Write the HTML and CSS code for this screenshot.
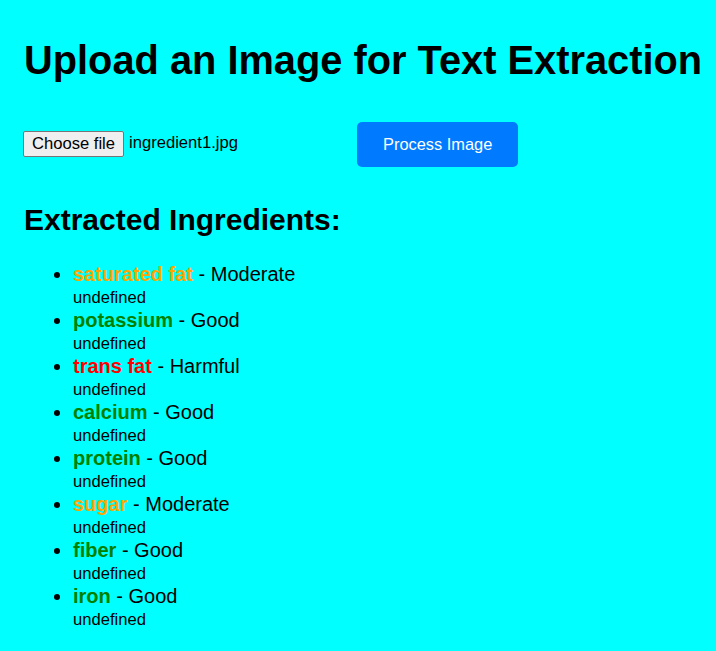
FILE: index.html
```html
<!DOCTYPE html>
<html>
<head>
<meta charset="utf-8">
<link rel="stylesheet" href="styles.css">
</head>
<body>
<div class="container">
  <h1 class="title">Upload an Image for Text Extraction</h1>
  <div class="upload-row">
    <div class="file-input">
      <span class="file-btn">Choose file</span>
      <span class="file-name">ingredient1.jpg</span>
    </div>
    <button class="process-btn">Process Image</button>
  </div>
  <h2 class="subtitle">Extracted Ingredients:</h2>
  <ul class="ingredients">
    <li><span class="name moderate">saturated fat</span> - Moderate<div class="desc">undefined</div></li>
    <li><span class="name good">potassium</span> - Good<div class="desc">undefined</div></li>
    <li><span class="name harmful">trans fat</span> - Harmful<div class="desc">undefined</div></li>
    <li><span class="name good">calcium</span> - Good<div class="desc">undefined</div></li>
    <li><span class="name good">protein</span> - Good<div class="desc">undefined</div></li>
    <li><span class="name moderate">sugar</span> - Moderate<div class="desc">undefined</div></li>
    <li><span class="name good">fiber</span> - Good<div class="desc">undefined</div></li>
    <li><span class="name good">iron</span> - Good<div class="desc">undefined</div></li>
  </ul>
</div>
</body>
</html>
```
FILE: styles.css
```css
html, body {
  margin: 0;
  padding: 0;
  background: #00ffff;
}
body {
  font-family: "Liberation Sans", Arial, sans-serif;
  color: #000;
}
.container {
  padding: 20px 8px 20px 24px;
}
.title {
  font-size: 39.8px;
  font-weight: bold;
  margin: 18px 0 38px;
  line-height: 1.15;
  white-space: nowrap;
}
.upload-row {
  display: flex;
  align-items: center;
}
.file-input {
  display: flex;
  align-items: center;
  width: 333px;
  font-size: 16.6px;
}
.file-btn {
  display: inline-block;
  box-sizing: border-box;
  height: 26px;
  padding: 2px 8px;
  border: 1px solid #767676;
  border-radius: 2px;
  background: #efefef;
  line-height: 20px;
  margin-right: 5px;
  margin-left: -1px;
}
.file-name {
  margin-top: -2px;
}
.process-btn {
  font-family: "Liberation Sans", Arial, sans-serif;
  font-size: 16.4px;
  background: #007bff;
  color: #fff;
  border: none;
  border-radius: 5px;
  padding: 13px 26px;
  line-height: 19px;
}
.subtitle {
  font-size: 30px;
  font-weight: bold;
  margin: 36px 0 26px;
}
.ingredients {
  margin: 0;
  padding-left: 49px;
  font-size: 20px;
}
.ingredients li {
  margin-bottom: 0;
}
.name {
  font-weight: bold;
}
.good { color: #008000; }
.moderate { color: #ffa500; }
.harmful { color: #ff0000; }
.desc {
  font-size: 16.6px;
  line-height: 22px;
  padding-top: 1px;
}
```
